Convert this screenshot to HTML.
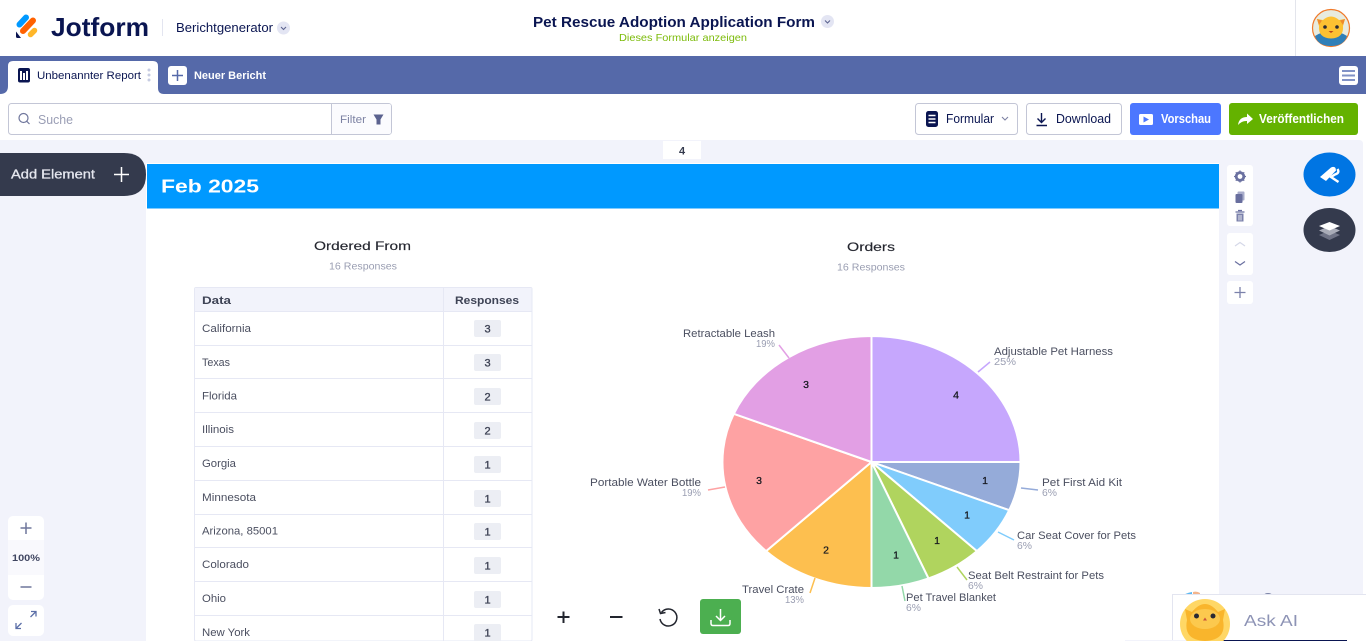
<!DOCTYPE html>
<html lang="de"><head><meta charset="utf-8"><title>Jotform Berichtgenerator</title>
<style>
html,body{margin:0;padding:0;width:1366px;height:641px;overflow:hidden;background:#fff}
svg{display:block}
text{font-family:"Liberation Sans",sans-serif}
.c{font-size:11px;fill:#4b4f60;filter:blur(.3px)}
.p{font-size:10px;fill:#9a9eb2;filter:blur(.3px)}
.b{font-size:11px;fill:#3f4456;font-weight:bold;filter:blur(.3px)}
.n{font-size:10.500px;fill:#16181f;text-anchor:middle;stroke:#16181f;stroke-width:.25;filter:blur(.2px)}
.t{font-size:12px;fill:#24262f;stroke:#24262f;stroke-width:.15;filter:blur(.25px)}
.r{fill:#eceef4}
</style></head><body>
<svg width="1366" height="641" viewBox="0 0 1366 641" xmlns="http://www.w3.org/2000/svg">
<rect width="1366" height="641" fill="#fff"/>
<!-- header logo -->
<g stroke-linecap="round" fill="none">
<path d="M19.500 24.500L26 17.500" stroke="#0099ff" stroke-width="6"/>
<path d="M23 31L33 20.500" stroke="#ff6100" stroke-width="6"/>
<path d="M30.500 34.500L34.500 30.500" stroke="#ffb629" stroke-width="5.500"/>
</g>
<path d="M16 31.500L21 38H17.500Q16 38 16 36.500Z" fill="#0a1551"/>
<text x="51" y="36" font-size="26" font-weight="bold" fill="#0a1551" textLength="98" lengthAdjust="spacingAndGlyphs">Jotform</text>
<rect x="162" y="19" width="1" height="17" fill="#e3e5f0"/>
<text x="176" y="32" font-size="13" fill="#0a1551" textLength="97" lengthAdjust="spacingAndGlyphs">Berichtgenerator</text>
<circle cx="283.500" cy="28" r="6.500" fill="#e3e5f3"/>
<path d="M281 27L283.500 29.500L286 27" fill="none" stroke="#5b628f" stroke-width="1.100"/>
<text x="533" y="27" font-size="15" font-weight="bold" fill="#0a1551" textLength="282" lengthAdjust="spacingAndGlyphs">Pet Rescue Adoption Application Form</text>
<circle cx="827.500" cy="21.500" r="6.500" fill="#e3e5f3"/>
<path d="M825 20.500L827.500 23L830 20.500" fill="none" stroke="#5b628f" stroke-width="1.100"/>
<text x="619" y="41" font-size="10.500" fill="#7cbb0a" textLength="128" lengthAdjust="spacingAndGlyphs">Dieses Formular anzeigen</text>
<rect x="1295" y="0" width="1" height="56" fill="#e3e5ec"/>
<!-- avatar -->
<circle cx="1331" cy="28" r="18.500" fill="#e8ebdf" stroke="#f07a2b" stroke-width="1.200"/>
<path d="M1315 36Q1331 26 1347 36Q1344 46 1331 46Q1318 46 1315 36Z" fill="#2f7fb8"/>
<path d="M1317 19L1323 20Q1331 13 1339 20L1345 19L1343 26Q1344 38 1331 38.500Q1318 38 1319 26Z" fill="#fdc132"/>
<path d="M1317 19L1322 20.500L1319 25Z M1345 19L1340 20.500L1343 25Z" fill="#ee8a2c"/>
<circle cx="1325" cy="27" r="1.800" fill="#2a2a33"/><circle cx="1337" cy="27" r="1.800" fill="#2a2a33"/>
<path d="M1328.500 31H1333.500L1331 33Z" fill="#b8431c"/>
<!-- tab bar -->
<rect y="56" width="1366" height="38" fill="#5569a9"/>
<path d="M0 94Q8 94 8 86V66Q8 61 13 61H153Q158 61 158 66V88Q158 94 164 94Z" fill="#fff"/>
<rect x="18" y="68" width="12" height="14.500" rx="2" fill="#0a1551"/>
<rect x="20" y="71" width="2" height="9" fill="#fff"/><rect x="23" y="73" width="2" height="7" fill="#fff"/><rect x="26" y="71" width="2" height="9" fill="#fff"/>
<text x="37" y="79" font-size="11" fill="#0a1551" textLength="104" lengthAdjust="spacingAndGlyphs">Unbenannter Report</text>
<g fill="#c6cce2"><circle cx="149" cy="70" r="1.500"/><circle cx="149" cy="75" r="1.500"/><circle cx="149" cy="80" r="1.500"/></g>
<rect x="168" y="66" width="19" height="19" rx="3" fill="#fff"/>
<path d="M177.500 70V81M172 75.500H183" stroke="#5569a9" stroke-width="1.500"/>
<text x="194" y="79" font-size="11" font-weight="bold" fill="#fff" textLength="72" lengthAdjust="spacingAndGlyphs">Neuer Bericht</text>
<rect x="1339" y="66" width="19" height="19" rx="3" fill="#fff"/>
<path d="M1342 71H1355M1342 75.500H1355M1342 80H1355" stroke="#8192c6" stroke-width="2"/>
<!-- toolbar -->
<rect x="8.500" y="103.500" width="383" height="31" rx="3" fill="#fff" stroke="#c3c6d6"/>
<path d="M331.500 104V134" stroke="#c3c6d6"/>
<rect x="332" y="104" width="59" height="30" rx="2" fill="#fbfbfe"/>
<circle cx="23.500" cy="118" r="4.500" fill="none" stroke="#6f769c" stroke-width="1.200"/>
<path d="M26.800 121.300L29.500 124" stroke="#6f769c" stroke-width="1.200"/>
<text x="38" y="124" font-size="12.500" fill="#9a9eb5" textLength="35" lengthAdjust="spacingAndGlyphs">Suche</text>
<text x="340" y="123" font-size="11" fill="#7d82a3" textLength="26" lengthAdjust="spacingAndGlyphs">Filter</text>
<path d="M373.500 114.500H383.500L380.500 119.500V124.500H376.500V119.500Z" fill="#5b628f"/>
<rect x="915.500" y="103.500" width="102" height="31" rx="3" fill="#fff" stroke="#c3c6d6"/>
<rect x="926" y="111" width="12" height="16" rx="2.500" fill="#0a1551"/>
<path d="M928.500 115.500H935.500M928.500 119H935.500M928.500 122.500H935.500" stroke="#fff" stroke-width="1.500"/>
<text x="946" y="123" font-size="12.500" fill="#0a1551" textLength="48" lengthAdjust="spacingAndGlyphs">Formular</text>
<path d="M1002 117L1005 120L1008 117" fill="none" stroke="#7d82a3" stroke-width="1.100"/>
<rect x="1026.500" y="103.500" width="95" height="31" rx="3" fill="#fff" stroke="#c3c6d6"/>
<path d="M1041.500 113V122M1037.500 118.500L1041.500 122.500L1045.500 118.500M1036.500 125.500H1047" fill="none" stroke="#0a1551" stroke-width="1.400"/>
<text x="1056" y="123" font-size="12.500" fill="#0a1551" textLength="55" lengthAdjust="spacingAndGlyphs">Download</text>
<rect x="1130" y="103" width="91" height="32" rx="3" fill="#4c77ff"/>
<rect x="1139" y="114" width="14" height="11" rx="1.500" fill="#fff"/>
<path d="M1143.500 116.500L1149 119.500L1143.500 122.500Z" fill="#4c77ff"/>
<text x="1161" y="123" font-size="12.500" font-weight="bold" fill="#fff" textLength="50" lengthAdjust="spacingAndGlyphs">Vorschau</text>
<rect x="1229" y="103" width="129" height="32" rx="3" fill="#64b200"/>
<path d="M1238 125Q1239 117 1247 117V113.500L1253 119L1247 124V121Q1242 120.500 1238 125Z" fill="#fff"/>
<text x="1259" y="123" font-size="12.500" font-weight="bold" fill="#fff" textLength="85" lengthAdjust="spacingAndGlyphs">Veröffentlichen</text>
<!-- canvas -->
<path d="M0 140H1359Q1363 140 1363 144V641H0Z" fill="#f2f3fb"/>
<rect x="663" y="141" width="38" height="18" fill="#fff"/>
<text x="682" y="154.500" font-size="11" font-weight="bold" fill="#343a4d" text-anchor="middle">4</text>
<rect x="146" y="163" width="1073" height="478" fill="#fff"/>
<rect x="147" y="164" width="1072" height="44.500" fill="#0099ff"/>
<text x="161" y="192.500" font-size="18" font-weight="bold" fill="#fff" textLength="98" lengthAdjust="spacingAndGlyphs" style="filter:blur(.25px)">Feb 2025</text>
<!-- add element -->
<path d="M0 153H124Q146 153 146 174.500Q146 196 124 196H0Z" fill="#343a4d"/>
<text x="11" y="178.500" font-size="12.500" fill="#e4e6ee" stroke="#e4e6ee" stroke-width=".3" textLength="84" lengthAdjust="spacingAndGlyphs" style="filter:blur(.25px)">Add Element</text>
<path d="M121.500 167V182M114 174.500H129" stroke="#fff" stroke-width="1.500"/>
<!-- left zoom -->
<rect x="8" y="516" width="36" height="84" rx="5" fill="#fff"/>
<rect x="8" y="540" width="36" height="35" fill="#f9f9fd"/>
<path d="M26 522.500V534M20.500 528H31.500M20.500 587H31.500" stroke="#6f769c" stroke-width="1.500"/>
<text x="26" y="561" font-size="9.500" font-weight="bold" fill="#3f4560" text-anchor="middle" textLength="28" lengthAdjust="spacingAndGlyphs">100%</text>
<rect x="8" y="605" width="36" height="31" rx="5" fill="#fff"/>
<path d="M30.500 617L35.500 612M31 611.500H36V616.500M21.500 623L16.500 628M16 623V628.500H21" fill="none" stroke="#5c6fa8" stroke-width="1.300"/>
<!-- right tools -->
<rect x="1227" y="165" width="26" height="61" rx="3" fill="#fff"/>
<rect x="1227" y="233" width="26" height="42" rx="3" fill="#fff"/>
<rect x="1227" y="281" width="26" height="23" rx="3" fill="#fff"/>
<circle cx="1240" cy="176.500" r="3.800" fill="none" stroke="#6a70a0" stroke-width="2.800"/>
<path d="M1240 170.500V182.500M1234 176.500H1246M1235.800 172.300L1244.200 180.700M1244.200 172.300L1235.800 180.700" stroke="#6a70a0" stroke-width="1.300" stroke-dasharray="2 8"/>
<rect x="1237.500" y="191.500" width="7" height="9" rx="1" fill="#a9adcb"/><rect x="1235.500" y="194" width="7" height="9" rx="1" fill="#686e9e"/>
<path d="M1235.500 212H1244.500M1238 210.500H1242" stroke="#6a70a0" stroke-width="1.300"/>
<path d="M1236.500 213.500H1243.500V221.500H1236.500Z" fill="#7b81ab"/>
<path d="M1239 215V220.500M1241 215V220.500" stroke="#fff" stroke-width=".8"/>
<path d="M1235 246L1240 242.500L1245 246" fill="none" stroke="#d5d8e8" stroke-width="1.200"/>
<path d="M1235 261.500L1240 265L1245 261.500" fill="none" stroke="#6a70a0" stroke-width="1.200"/>
<path d="M1240 287V298M1234.500 292.500H1245.500" stroke="#7b81ab" stroke-width="1.300"/>
<ellipse cx="1329.500" cy="174.500" rx="26" ry="22" fill="#0075e3"/>
<path d="M1320 177L1331 167.500Q1334 166 1335.500 168L1336 170.500L1326 181Z" fill="#fff"/>
<path d="M1337.500 169Q1340 173 1335 174.500L1331 177L1338.500 182" fill="none" stroke="#fff" stroke-width="2.400"/>
<ellipse cx="1329.500" cy="230" rx="26" ry="22" fill="#343a4d"/>
<path d="M1319 235L1329.500 230.500L1340 235L1329.500 240Z" fill="#6f7386"/>
<path d="M1319 230.500L1329.500 226L1340 230.500L1329.500 235.500Z" fill="#a9acb8"/>
<path d="M1319 226L1329.500 222L1340 226L1329.500 230.500Z" fill="#fff"/>
<!-- table -->
<text x="314" y="250" class="t" textLength="97" lengthAdjust="spacingAndGlyphs">Ordered From</text>
<text x="329" y="269.500" class="p" textLength="68" lengthAdjust="spacingAndGlyphs">16 Responses</text>
<rect x="194.500" y="287.500" width="337.500" height="353.500" rx="1.500" fill="#fff" stroke="#e6e8f4"/>
<rect x="195" y="288" width="336.500" height="23" fill="#f2f3fb"/>
<path d="M195 311.500H532M195 345.500H532M195 378.500H532M195 412.500H532M195 446.500H532M195 480.500H532M195 514.500H532M195 547.500H532M195 581.500H532M195 615.500H532M443.500 288V641" stroke="#e6e8f4" fill="none"/>
<text x="202" y="304" class="b" textLength="29" lengthAdjust="spacingAndGlyphs">Data</text>
<text x="455" y="304" class="b" textLength="64" lengthAdjust="spacingAndGlyphs">Responses</text>
<g>
<rect class="r" x="474" y="320" width="27" height="17" rx="2"/><rect class="r" x="474" y="354" width="27" height="17" rx="2"/>
<rect class="r" x="474" y="388" width="27" height="17" rx="2"/><rect class="r" x="474" y="422" width="27" height="17" rx="2"/>
<rect class="r" x="474" y="456" width="27" height="17" rx="2"/><rect class="r" x="474" y="490" width="27" height="17" rx="2"/>
<rect class="r" x="474" y="523" width="27" height="17" rx="2"/><rect class="r" x="474" y="557" width="27" height="17" rx="2"/>
<rect class="r" x="474" y="591" width="27" height="17" rx="2"/><rect class="r" x="474" y="624" width="27" height="17" rx="2"/>
</g>
<text x="202" y="332" class="c" textLength="49" lengthAdjust="spacingAndGlyphs">California</text>
<text x="202" y="366" class="c" textLength="28" lengthAdjust="spacingAndGlyphs">Texas</text>
<text x="202" y="399.500" class="c" textLength="35" lengthAdjust="spacingAndGlyphs">Florida</text>
<text x="202" y="433" class="c" textLength="32" lengthAdjust="spacingAndGlyphs">Illinois</text>
<text x="202" y="467" class="c" textLength="34" lengthAdjust="spacingAndGlyphs">Gorgia</text>
<text x="202" y="501" class="c" textLength="54" lengthAdjust="spacingAndGlyphs">Minnesota</text>
<text x="202" y="534.500" class="c" textLength="76" lengthAdjust="spacingAndGlyphs">Arizona, 85001</text>
<text x="202" y="568" class="c" textLength="47" lengthAdjust="spacingAndGlyphs">Colorado</text>
<text x="202" y="602" class="c" textLength="24" lengthAdjust="spacingAndGlyphs">Ohio</text>
<text x="202" y="636" class="c" textLength="48" lengthAdjust="spacingAndGlyphs">New York</text>
<g font-size="11" fill="#3f4456" text-anchor="middle" stroke="#3f4456" stroke-width=".35" style="filter:blur(.2px)">
<text x="487.500" y="332.500">3</text><text x="487.500" y="366.500">3</text><text x="487.500" y="400.500">2</text><text x="487.500" y="434.500">2</text><text x="487.500" y="468.500">1</text><text x="487.500" y="502.500">1</text><text x="487.500" y="535.500">1</text><text x="487.500" y="569.500">1</text><text x="487.500" y="603.500">1</text><text x="487.500" y="636.500">1</text>
</g>
<!-- pie -->
<text x="847" y="251" class="t" textLength="48" lengthAdjust="spacingAndGlyphs">Orders</text>
<text x="837" y="270.500" class="p" textLength="68" lengthAdjust="spacingAndGlyphs">16 Responses</text>
<g stroke="#fff" stroke-width="2">
<path d="M871.500 462L871.500 336A149 126 0 0 1 1020.500 462Z" fill="#c6a7fd"/>
<path d="M871.500 462L1020.500 462A149 126 0 0 1 1009.200 510.200Z" fill="#95abd9"/>
<path d="M871.500 462L1009.200 510.200A149 126 0 0 1 976.900 551.100Z" fill="#80ccfc"/>
<path d="M871.500 462L976.900 551.100A149 126 0 0 1 928.500 578.400Z" fill="#b0d45e"/>
<path d="M871.500 462L928.500 578.400A149 126 0 0 1 871.500 588Z" fill="#93d8a9"/>
<path d="M871.500 462L871.500 588A149 126 0 0 1 766.100 551.100Z" fill="#fdbf4f"/>
<path d="M871.500 462L766.100 551.100A149 126 0 0 1 733.800 413.800Z" fill="#fea2a3"/>
<path d="M871.500 462L733.800 413.800A149 126 0 0 1 871.500 336Z" fill="#e29fe4"/>
</g>
<g fill="none" stroke-width="1.500">
<path d="M779 345L789 358" stroke="#e29fe4"/><path d="M990 362L978 372" stroke="#c6a7fd"/>
<path d="M1021 488L1038 490" stroke="#95abd9"/><path d="M998 532L1014 540" stroke="#80ccfc"/>
<path d="M957 567L967 580" stroke="#b0d45e"/><path d="M902 586L905 601" stroke="#93d8a9"/>
<path d="M815 578L810 593" stroke="#fdbf4f"/><path d="M708 490L725 487" stroke="#fea2a3"/>
</g>
<text class="n" x="806" y="388">3</text><text class="n" x="956" y="398.500">4</text><text class="n" x="759" y="484">3</text>
<text class="n" x="826" y="553.500">2</text><text class="n" x="896" y="558.500">1</text><text class="n" x="937" y="544">1</text>
<text class="n" x="967" y="518.500">1</text><text class="n" x="985" y="484">1</text>
<text x="683" y="337" class="c" textLength="92" lengthAdjust="spacingAndGlyphs">Retractable Leash</text>
<text x="756" y="347" class="p" textLength="19" lengthAdjust="spacingAndGlyphs">19%</text>
<text x="994" y="355" class="c" textLength="119" lengthAdjust="spacingAndGlyphs">Adjustable Pet Harness</text>
<text x="994" y="365" class="p" textLength="22" lengthAdjust="spacingAndGlyphs">25%</text>
<text x="1042" y="486" class="c" textLength="80" lengthAdjust="spacingAndGlyphs">Pet First Aid Kit</text>
<text x="1042" y="496" class="p" textLength="15" lengthAdjust="spacingAndGlyphs">6%</text>
<text x="1017" y="539" class="c" textLength="119" lengthAdjust="spacingAndGlyphs">Car Seat Cover for Pets</text>
<text x="1017" y="549" class="p" textLength="15" lengthAdjust="spacingAndGlyphs">6%</text>
<text x="968" y="579" class="c" textLength="136" lengthAdjust="spacingAndGlyphs">Seat Belt Restraint for Pets</text>
<text x="968" y="589" class="p" textLength="15" lengthAdjust="spacingAndGlyphs">6%</text>
<text x="906" y="601" class="c" textLength="90" lengthAdjust="spacingAndGlyphs">Pet Travel Blanket</text>
<text x="906" y="611" class="p" textLength="15" lengthAdjust="spacingAndGlyphs">6%</text>
<text x="742" y="593" class="c" textLength="62" lengthAdjust="spacingAndGlyphs">Travel Crate</text>
<text x="785" y="603" class="p" textLength="19" lengthAdjust="spacingAndGlyphs">13%</text>
<text x="590" y="486" class="c" textLength="111" lengthAdjust="spacingAndGlyphs">Portable Water Bottle</text>
<text x="682" y="496" class="p" textLength="19" lengthAdjust="spacingAndGlyphs">19%</text>
<!-- bottom controls -->
<path d="M563.500 611.500V623M557.500 617H569.500M610 617H622.500" stroke="#22252e" stroke-width="2"/>
<path d="M661.500 612.500A8.500 8.500 0 1 1 660 619" fill="none" stroke="#22252e" stroke-width="1.500"/>
<path d="M659 609L660.500 613.500L665.500 612.500" fill="none" stroke="#22252e" stroke-width="1.500"/>
<rect x="700" y="599" width="41" height="35" rx="3" fill="#4caf50"/>
<path d="M720.500 609V620M716 616L720.500 620.500L725 616M711 620V623.500Q711 625.500 713 625.500H728Q730 625.500 730 623.500V620" fill="none" stroke="#fff" stroke-width="1.500"/>
<!-- ask ai -->
<path d="M1174 610Q1178 594 1192 592V610Z" fill="#5cb8f2"/>
<path d="M1193 592Q1197 591 1200 593V596H1193Z" fill="#f3b48c"/>
<ellipse cx="1268" cy="595" rx="4" ry="2" fill="#7d85a8"/>
<rect x="1172.500" y="594.500" width="194" height="47" fill="#fff" stroke="#e3e5f0"/>
<rect x="1125" y="640" width="92" height="1" fill="#f2f3fb"/><rect x="1217" y="640" width="130" height="1" fill="#0a1551"/>
<circle cx="1205" cy="624" r="25" fill="#ffd765"/>
<path d="M1185 609L1192 612Q1205 596 1218 612L1225 609L1223 620Q1227 640 1205 641Q1183 640 1187 620Z" fill="#f9b52c"/>
<ellipse cx="1205" cy="619" rx="15" ry="10" fill="#fcc94e"/>
<circle cx="1196.500" cy="616" r="2.500" fill="#2a2a33"/><circle cx="1213" cy="616" r="2.500" fill="#2a2a33"/>
<path d="M1203 620.500H1207L1205 617.500Z" fill="#c9543a"/>
<text x="1244" y="626" font-size="16" fill="#8d93b5" textLength="54" lengthAdjust="spacingAndGlyphs">Ask AI</text>
</svg>
</body></html>
